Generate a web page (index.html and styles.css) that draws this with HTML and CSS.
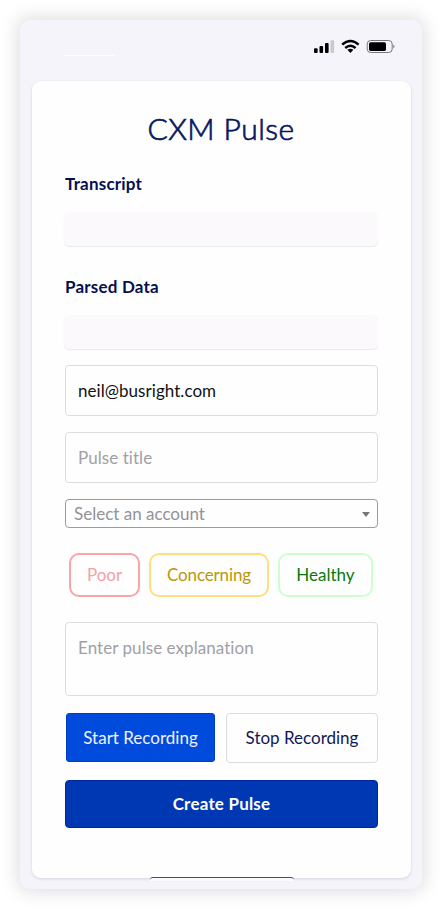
FILE: index.html
```html
<!DOCTYPE html>
<html lang="en">
<head>
<meta charset="utf-8">
<title>CXM Pulse</title>
<link rel="stylesheet" href="styles.css">
</head>
<body>
<main class="phone">
  <header class="status">
    <span class="status-line"></span>
    <svg class="status-icons" width="84" height="16" viewBox="0 0 84 16">
      <rect x="1" y="9.3" width="3.6" height="4.7" rx="1"/>
      <rect x="6.5" y="7" width="3.6" height="7" rx="1"/>
      <rect x="12" y="4" width="3.6" height="10" rx="1"/>
      <rect x="17.5" y="1.2" width="3.6" height="12.8" rx="1" fill="#cbc9cf"/>
      <g fill="none" stroke="#000" stroke-width="2.4">
        <path d="M29.2 5.7Q37.4 -1.7 45.6 5.7"/>
        <path d="M32.2 9Q37.4 4.5 42.6 9"/>
      </g>
      <path d="M34.4 10.8Q37.4 8.7 40.4 10.8L37.4 13.9Z"/>
      <rect x="54.2" y="1.5" width="25" height="12" rx="3.5" fill="none" stroke="#77767b"/>
      <rect x="56" y="3.2" width="17" height="8.7" rx="1.6"/>
      <path d="M80.4 5.6Q82.8 7.5 80.4 9.4Z" fill="#77767b"/>
    </svg>
  </header>
  <section class="card">
    <h1 class="title">CXM Pulse</h1>
    <h2 class="label label-transcript">Transcript</h2>
    <div class="output"></div>
    <h2 class="label label-parsed">Parsed Data</h2>
    <div class="output"></div>
    <div class="field email"><span>neil@busright.com</span></div>
    <div class="field hint pulse-title"><span>Pulse title</span></div>
    <div class="select"><span>Select an account</span><i class="caret"></i></div>
    <div class="ratings">
      <button class="rating poor">Poor</button>
      <button class="rating concerning">Concerning</button>
      <button class="rating healthy">Healthy</button>
    </div>
    <div class="field hint explanation"><span>Enter pulse explanation</span></div>
    <div class="recording">
      <button class="start">Start Recording</button>
      <button class="stop">Stop Recording</button>
    </div>
    <button class="create">Create Pulse</button>
  </section>
  <div class="sheet-edge"></div>
</main>
</body>
</html>
```
FILE: styles.css
```css
* { box-sizing: border-box; }
body {
  margin: 0;
  padding: 20px 21px 20px 20px;
  height: 909px;
  overflow: hidden;
  background: #fff;
  font: 17px/24px Lato, "Noto Sans", sans-serif;
  font-variant-ligatures: none;
  color: #05104f;
}
button { font: inherit; font-variant-ligatures: none; padding: 0; background: #fefefe; white-space: nowrap; }
.phone {
  position: relative;
  height: 869px;
  padding: 0 11px 0 12px;
  background: #f5f4fb;
  border-radius: 10px;
  box-shadow: 0 0 18px 3px rgba(0, 0, 0, .13);
}
.status {
  height: 61px;
  padding: 19px 14px 0 31px;
  display: flex;
  justify-content: space-between;
}
.status-line { width: 51px; height: 1px; margin-top: 16px; background: #fff; }
.card {
  height: 797px;
  padding: 29px 33px 0;
  background: #fefefe;
  border-radius: 9px;
  box-shadow: 0 1px 3px rgba(60, 50, 110, .18);
}
.title {
  margin: 0 1px 0 0;
  height: 38px;
  font-size: 30px;
  line-height: 36px;
  font-weight: 300;
  letter-spacing: .45px;
  text-align: center;
  color: #07185f;
  -webkit-text-stroke: .7px #07185f;
}
.label {
  margin: 24px 0 16px;
  font-size: 17px;
  line-height: 24px;
  font-weight: 700;
  letter-spacing: .2px;
}
.output {
  height: 34px;
  margin: 0 0 0 -1px;
  border-radius: 5px;
  background: #fbf9fc;
  box-shadow: 0 1px 1px rgba(50, 40, 80, .1);
}
.label-parsed { margin: 29px 0 16px; }
.field {
  height: 51px;
  padding: 13px 12px;
  border: 1px solid #dcdce1;
  border-radius: 4px;
  background: #fefefe;
}
.field span { white-space: nowrap; }
.email { margin-top: 16px; color: #111; letter-spacing: .05px; }
.hint { color: #a0a0a5; letter-spacing: .06px; }
.pulse-title { margin-top: 16px; }
.select {
  height: 29px;
  margin-top: 16px;
  padding: 1px 7px 0 8px;
  display: flex;
  align-items: center;
  justify-content: space-between;
  border: 1px solid #9b9b9e;
  border-radius: 4px;
  color: #929297;
}
.caret {
  border: 4px solid transparent;
  border-top: 5px solid #77777a;
  border-bottom: 0;
}
.ratings { display: flex; gap: 9px; margin: 25px 4px 0; }
.rating { height: 44px; border: 2px solid; border-radius: 10px; }
.poor { width: 71px; border-color: #faa4a9; color: #f3a0a6; }
.concerning { width: 120px; border-color: #fedf7c; color: #bc9508; letter-spacing: -.15px; }
.healthy { width: 95px; border-color: #cdffcd; color: #08780c; }
.explanation { height: 74px; margin-top: 25px; }
.recording { display: grid; grid-template-columns: 149px 152px; gap: 11px; margin: 17px 0 0 1px; }
.start { height: 49px; border: 1px solid #003dc0; border-radius: 3px; background: #004bdc; color: #edf2ff; }
.stop { height: 50px; border: 1px solid #dcdce1; border-radius: 4px; color: #101858; }
.create {
  width: 100%;
  height: 48px;
  margin-top: 17px;
  border: 1px solid #0026a0;
  border-radius: 4px;
  background: #0037b2;
  color: #fff;
  font-weight: 700;
  letter-spacing: .2px;
}
.sheet-edge {
  position: absolute;
  left: 130px;
  top: 857px;
  width: 144px;
  height: 4px;
  border-top: 1px solid #4b4b50;
  border-radius: 3px 3px 0 0;
  background: #fbfaff;
}
```
